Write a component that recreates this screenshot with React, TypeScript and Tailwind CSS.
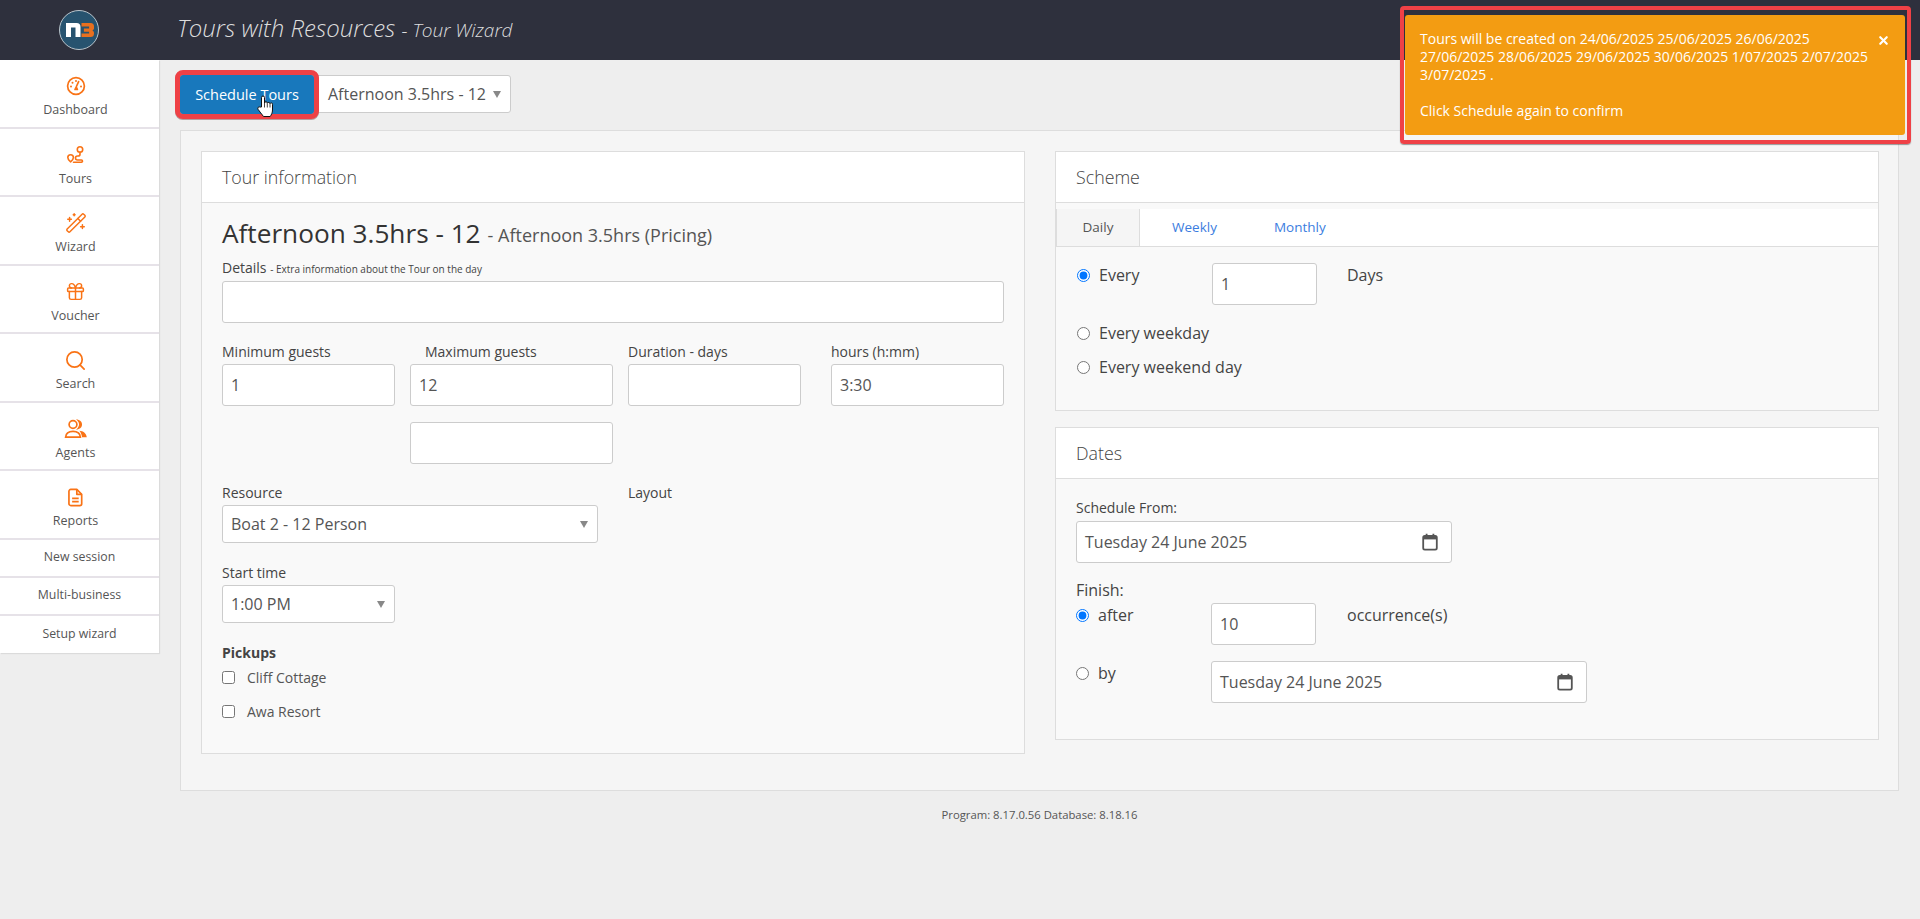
import React from "react";
import { Search, Gift, WandSparkles, X } from "lucide-react";

const font = { fontFamily: '"Open Sans", sans-serif' };

function Logo() {
  return (
    <svg width="42" height="42" viewBox="0 0 42 42">
      <circle cx="21" cy="21" r="19.5" fill="#27536f" stroke="#b9c4cb" strokeWidth="1" />
      <path d="M8 14h10.5a4 4 0 0 1 4 4v10h-5V18.5h-4.5V28H8Z" fill="#fff" />
      <path d="M23.5 14h9a3.5 3.5 0 0 1 3.5 3.5v2.2a3 3 0 0 1-1.6 1.8 3 3 0 0 1 1.6 2v1a3.5 3.5 0 0 1-3.5 3.5h-9v-3.6h7.6v-1.7h-5.2v-3.2h5.2v-1.9h-7.6Z" fill="#e8701f" />
    </svg>
  );
}

const ic = "#f97316";
const Dash = () => (
  <svg width="20" height="20" viewBox="0 0 20 20" fill="none" stroke={ic} strokeWidth="1.7">
    <circle cx="10" cy="10" r="8.4" />
    <path d="M10.4 10.5 12.6 5.6M9 13.5h2.4" strokeLinecap="round" />
    <circle cx="10.2" cy="12.2" r="1.5" fill={ic} stroke="none" />
    <g fill={ic} stroke="none"><circle cx="5" cy="10.5" r="1" /><circle cx="6.5" cy="6.8" r="1" /><circle cx="10" cy="5" r="1" /><circle cx="15" cy="10.5" r="1" /></g>
  </svg>
);
const Route = () => (
  <svg width="20" height="20" viewBox="0 0 20 20" fill="none" stroke={ic} strokeWidth="1.6" strokeLinecap="round">
    <circle cx="14" cy="4.4" r="2.7" />
    <path d="M4.6 9.8a2.8 2.8 0 0 1 2.8 2.8c0 1.5-1.7 3.4-2.8 4.2-1.1-.8-2.8-2.7-2.8-4.2a2.8 2.8 0 0 1 2.8-2.8Z" />
    <path d="M14 8v1.2c0 1.2-1 1.8-2 1.8h-.5c-1.3 0-2 1-2 2s.8 2 2 2h4c1.2 0 1.4 2.2 0 2.2H7.5" />
  </svg>
);
const Agents = () => (
  <svg width="24" height="20" viewBox="0 0 24 20" fill="none" stroke={ic} strokeWidth="1.7">
    <circle cx="9" cy="5.5" r="3.9" />
    <path d="M14.5 1.8a3.9 3.9 0 0 1 0 7.4 6 6 0 0 0 0-7.4Z" fill={ic} />
    <path d="M1.6 18.2c.3-3.8 3.2-5.8 7.4-5.8s7.1 2 7.4 5.8Z" />
    <path d="M15.4 11.8c3.8.2 6.8 2.6 7.4 6.4h-4.8c-.3-2.4-1.2-4.8-2.6-6.4Z" fill={ic} stroke="none" />
  </svg>
);
const Reports = () => (
  <svg width="15" height="19" viewBox="0 0 16 20" fill="none" stroke={ic} strokeWidth="1.8" strokeLinejoin="round">
    <path d="M3 1.4h6.4l5.2 5.2v10a2 2 0 0 1-2 2H3a2 2 0 0 1-2-2V3.4a2 2 0 0 1 2-2Z" />
    <path d="M9.4 1.4v5.2h5.2" />
    <path d="M4.4 11h7M4.4 14.4h7" />
  </svg>
);

function NavItem({ icon, label }: { icon: React.ReactNode; label: string }) {
  return (
    <div className="h-[68.5px] border-b-2 border-[#e6e2e8] flex flex-col items-center pr-[8px] pt-[14px]">
      <div className="h-[24px] flex items-center justify-center">{icon}</div>
      <div className="text-[12.5px] leading-[18px] mt-[3px] text-[#555]">{label}</div>
    </div>
  );
}
function SmallItem({ label, last }: { label: string; last?: boolean }) {
  return (
    <div className={`${last ? "h-[37px]" : "h-[38px] border-b-2 border-[#e6e2e8]"} flex items-center justify-center text-[12.3px] text-[#555]`}>{label}</div>
  );
}

function Field({ value = "", className = "" }: { value?: string; className?: string }) {
  return (
    <input
      readOnly
      defaultValue={value}
      style={font}
      className={`block h-[42px] bg-white border border-[#ccc] rounded-[3px] px-[8px] text-[16px] text-[#555] outline-none ${className}`}
    />
  );
}

function Caret() {
  return <span className="w-0 h-0 border-l-[4px] border-r-[4px] border-t-[7px] border-l-transparent border-r-transparent border-t-[#888]" />;
}

function SelectBox({ value, className = "" }: { value: string; className?: string }) {
  return (
    <div className={`h-[38px] bg-white border border-[#ccc] rounded-[3px] flex items-center justify-between pl-[8px] pr-[9px] text-[16px] text-[#555] ${className}`}>
      <span>{value}</span>
      <Caret />
    </div>
  );
}

function Radio({ on }: { on?: boolean }) {
  return <input type="radio" readOnly checked={!!on} className="m-0 w-[13px] h-[13px] shrink-0" />;
}

function Check() {
  return <input type="checkbox" readOnly checked={false} className="m-0 w-[13px] h-[13px] shrink-0" />;
}

function Card({ title, children, className = "" }: { title: string; children: React.ReactNode; className?: string }) {
  return (
    <section className={`bg-[#f9f9f9] border border-[#ddd] ${className}`}>
      <header className="h-[51px] bg-white border-b border-[#ddd] flex items-center pl-[20px] text-[17.8px] font-light text-[#444]">{title}</header>
      {children}
    </section>
  );
}

function Label({ children, className = "" }: { children: React.ReactNode; className?: string }) {
  return <div className={`text-[14px] leading-[20px] text-[#444] ${className}`}>{children}</div>;
}

function Calendar() {
  return (
    <svg width="16" height="18" viewBox="0 0 16 18" fill="none" stroke="#555" strokeWidth="1.8">
      <rect x="1.2" y="3" width="13.6" height="13.6" rx="1.6" />
      <path d="M1.2 4h13.6v2.4H1.2Z" fill="#555" stroke="none" />
      <path d="M4.6.8v3M11.4.8v3" />
    </svg>
  );
}

function DateField({ className = "" }: { className?: string }) {
  return (
    <div className={`h-[42px] bg-white border border-[#ccc] rounded-[3px] flex items-center justify-between pl-[8px] pr-[13px] text-[16px] text-[#555] ${className}`}>
      <span>Tuesday 24 June 2025</span>
      <Calendar />
    </div>
  );
}

function Hand() {
  return (
    <svg width="17" height="23" viewBox="0 0 17 23" className="absolute left-[77px] top-[20px]">
      <path d="M4.5 12V2.5a1.5 1.5 0 0 1 3 0V8a1.4 1.4 0 0 1 2.8.3 1.4 1.4 0 0 1 2.7.4 1.3 1.3 0 0 1 2.5.6V15c0 3-1.2 4.8-2.3 6.5H6.5C5 19.5 2.6 16.6 1 14.3c-.9-1.5.8-3.2 2.2-2.2Z" fill="#fff" stroke="#111" strokeWidth="1" />
      <path d="M7.5 8v4.5M10.3 8.5v4M13 9v3.5" stroke="#111" strokeWidth=".8" />
    </svg>
  );
}

export default function App() {
  return (
    <div style={font} className="relative min-h-[919px] bg-[#eeeeee] text-[#444]">
      <header className="h-[60px] bg-[#2e303d] flex items-center">
        <div className="w-[157px] flex justify-center"><Logo /></div>
        <div className="ml-[20px] italic font-light text-[#dddddd] text-[24px] leading-none pb-[5px]">
          Tours with Resources <span className="text-[19px]">- Tour Wizard</span>
        </div>
      </header>

      <div className="flex items-start">
        <nav className="w-[159px] bg-white shrink-0 shadow-[1px_1px_1px_rgba(0,0,0,0.08)]">
          <NavItem icon={<Dash />} label="Dashboard" />
          <NavItem icon={<Route />} label="Tours" />
          <NavItem icon={<WandSparkles size={22} color={ic} strokeWidth={1.6} />} label="Wizard" />
          <NavItem icon={<Gift size={21} color={ic} strokeWidth={1.7} />} label="Voucher" />
          <NavItem icon={<Search size={23} color={ic} strokeWidth={1.8} />} label="Search" />
          <NavItem icon={<Agents />} label="Agents" />
          <NavItem icon={<Reports />} label="Reports" />
          <SmallItem label="New session" />
          <SmallItem label="Multi-business" />
          <SmallItem label="Setup wizard" last />
        </nav>

        <main className="flex-1 min-w-0 px-[21px]">
          <div className="flex items-start pt-[15px] h-[70px]">
            <button style={font} className="relative h-[39px] w-[134px] bg-[#1878bc] rounded-[3px] text-white text-[14.5px] outline-[5px] outline-[#ef4146] z-10 shadow-[0_1px_0_5px_rgba(110,60,60,0.45)]">
              Schedule Tours
              <Hand />
            </button>
            <SelectBox value="Afternoon 3.5hrs - 12" className="w-[197px] rounded-l-none pl-[13px]" />
          </div>

          <div className="bg-[#f5f5f5] border border-[#ddd] pt-[20px] pl-[20px] pr-[19px] pb-[36px] flex gap-[30px] items-start">
            {/* Tour information */}
            <Card title="Tour information" className="w-[824px] h-[603px]">
              <div className="pl-[20px] pr-[20px]">
                <div className="mt-[14px] h-[34px] flex items-center whitespace-nowrap">
                  <span className="text-[26.2px] text-[#333]">Afternoon 3.5hrs - 12</span>
                  <span className="text-[18px] text-[#555] ml-[7px] mt-[3px]">- Afternoon 3.5hrs (Pricing)</span>
                </div>
                <Label className="mt-[7px]">
                  Details <span className="text-[10px]">- Extra information about the Tour on the day</span>
                </Label>
                <Field className="w-full mt-[2px]" />

                <div className="flex mt-[19px]">
                  <div className="w-[173px]">
                    <Label>Minimum guests</Label>
                    <Field value="1" className="w-full mt-[2px]" />
                  </div>
                  <div className="w-[203px] ml-[15px]">
                    <Label className="pl-[15px]">Maximum guests</Label>
                    <Field value="12" className="w-full mt-[2px]" />
                    <Field className="w-full mt-[16px]" />
                  </div>
                  <div className="w-[173px] ml-[15px]">
                    <Label>Duration - days</Label>
                    <Field className="w-full mt-[2px]" />
                  </div>
                  <div className="w-[173px] ml-[30px]">
                    <Label>hours (h:mm)</Label>
                    <Field value="3:30" className="w-full mt-[2px]" />
                  </div>
                </div>

                <div className="flex mt-[19px]">
                  <div className="w-[376px]">
                    <Label>Resource</Label>
                    <SelectBox value="Boat 2 - 12 Person" className="w-full mt-[2px]" />
                  </div>
                  <Label className="ml-[30px]">Layout</Label>
                </div>

                <Label className="mt-[20px]">Start time</Label>
                <SelectBox value="1:00 PM" className="w-[173px] mt-[2px]" />

                <Label className="mt-[20px] font-bold">Pickups</Label>
                <div className="flex items-center h-[20px] mt-[4px]">
                  <Check />
                  <span className="ml-[12px] text-[14px] text-[#555]">Cliff Cottage</span>
                </div>
                <div className="flex items-center h-[20px] mt-[14px]">
                  <Check />
                  <span className="ml-[12px] text-[14px] text-[#555]">Awa Resort</span>
                </div>
              </div>
            </Card>

            <div className="flex-1 min-w-0 flex flex-col gap-[16px]">
              <Card title="Scheme" className="h-[260px]">
                <div className="mt-[6px] h-[38px] bg-white border-b border-[#ddd] flex text-[13.5px]">
                  <div className="w-[84px] h-[37px] bg-[#f5f5f5] border-l border-r border-[#ddd] flex items-center justify-center text-[#555]">Daily</div>
                  <div className="ml-[32px] flex items-center text-[#3b7de0]">Weekly</div>
                  <div className="ml-[57px] flex items-center text-[#3b7de0]">Monthly</div>
                </div>
                <div className="pl-[21px] text-[16px] text-[#444]">
                  <div className="flex items-start mt-[16px] h-[42px]">
                    <div className="w-[135px] h-[24px] flex items-center"><Radio on /><span className="ml-[9px]">Every</span></div>
                    <Field value="1" className="w-[105px]" />
                    <div className="ml-[30px] h-[24px] flex items-center">Days</div>
                  </div>
                  <div className="flex items-center h-[24px] mt-[16px]"><Radio /><span className="ml-[9px]">Every weekday</span></div>
                  <div className="flex items-center h-[24px] mt-[10px]"><Radio /><span className="ml-[9px]">Every weekend day</span></div>
                </div>
              </Card>

              <Card title="Dates" className="h-[313px]">
                <div className="pl-[20px] text-[16px] text-[#444]">
                  <Label className="pt-[19px]">Schedule From:</Label>
                  <DateField className="w-[376px] mt-[3px]" />
                  <div className="mt-[15px] mb-[1px] leading-[24px]">Finish:</div>
                  <div className="flex items-start">
                    <div className="w-[135px] h-[24px] flex items-center"><Radio on /><span className="ml-[9px]">after</span></div>
                    <Field value="10" className="w-[105px]" />
                    <div className="ml-[31px] h-[24px] flex items-center">occurrence(s)</div>
                  </div>
                  <div className="flex items-start mt-[16px]">
                    <div className="w-[135px] h-[24px] flex items-center"><Radio /><span className="ml-[9px]">by</span></div>
                    <DateField className="w-[376px]" />
                  </div>
                </div>
              </Card>
            </div>
          </div>

          <div className="mt-[16px] text-center text-[11.3px] leading-[16px] text-[#555]">Program: 8.17.0.56 Database: 8.18.16</div>
        </main>
      </div>

      {/* Annotation frame around the toast */}
      <div className="absolute left-[1400px] top-[6px] w-[511px] h-[138px] border-[4px] border-[#ef4146] rounded-[4px] shadow-[0_1px_1px_rgba(60,60,60,0.5)]" />

      {/* Notification toast */}
      <div className="absolute left-[1405px] top-[15px] w-[500px] h-[120px] bg-[#f39c12] rounded-[3px] text-white text-[14px] leading-[18px] pl-[15px] pr-[20px] pt-[15px]">
        <X className="absolute right-[15px] top-[19px]" size={13} strokeWidth={4} color="#fff" />
        <div className="w-[450px]">
          Tours will be created on 24/06/2025 25/06/2025 26/06/2025 27/06/2025 28/06/2025 29/06/2025 30/06/2025 1/07/2025 2/07/2025 3/07/2025 .
        </div>
        <div className="mt-[18px]">Click Schedule again to confirm</div>
      </div>
    </div>
  );
}
